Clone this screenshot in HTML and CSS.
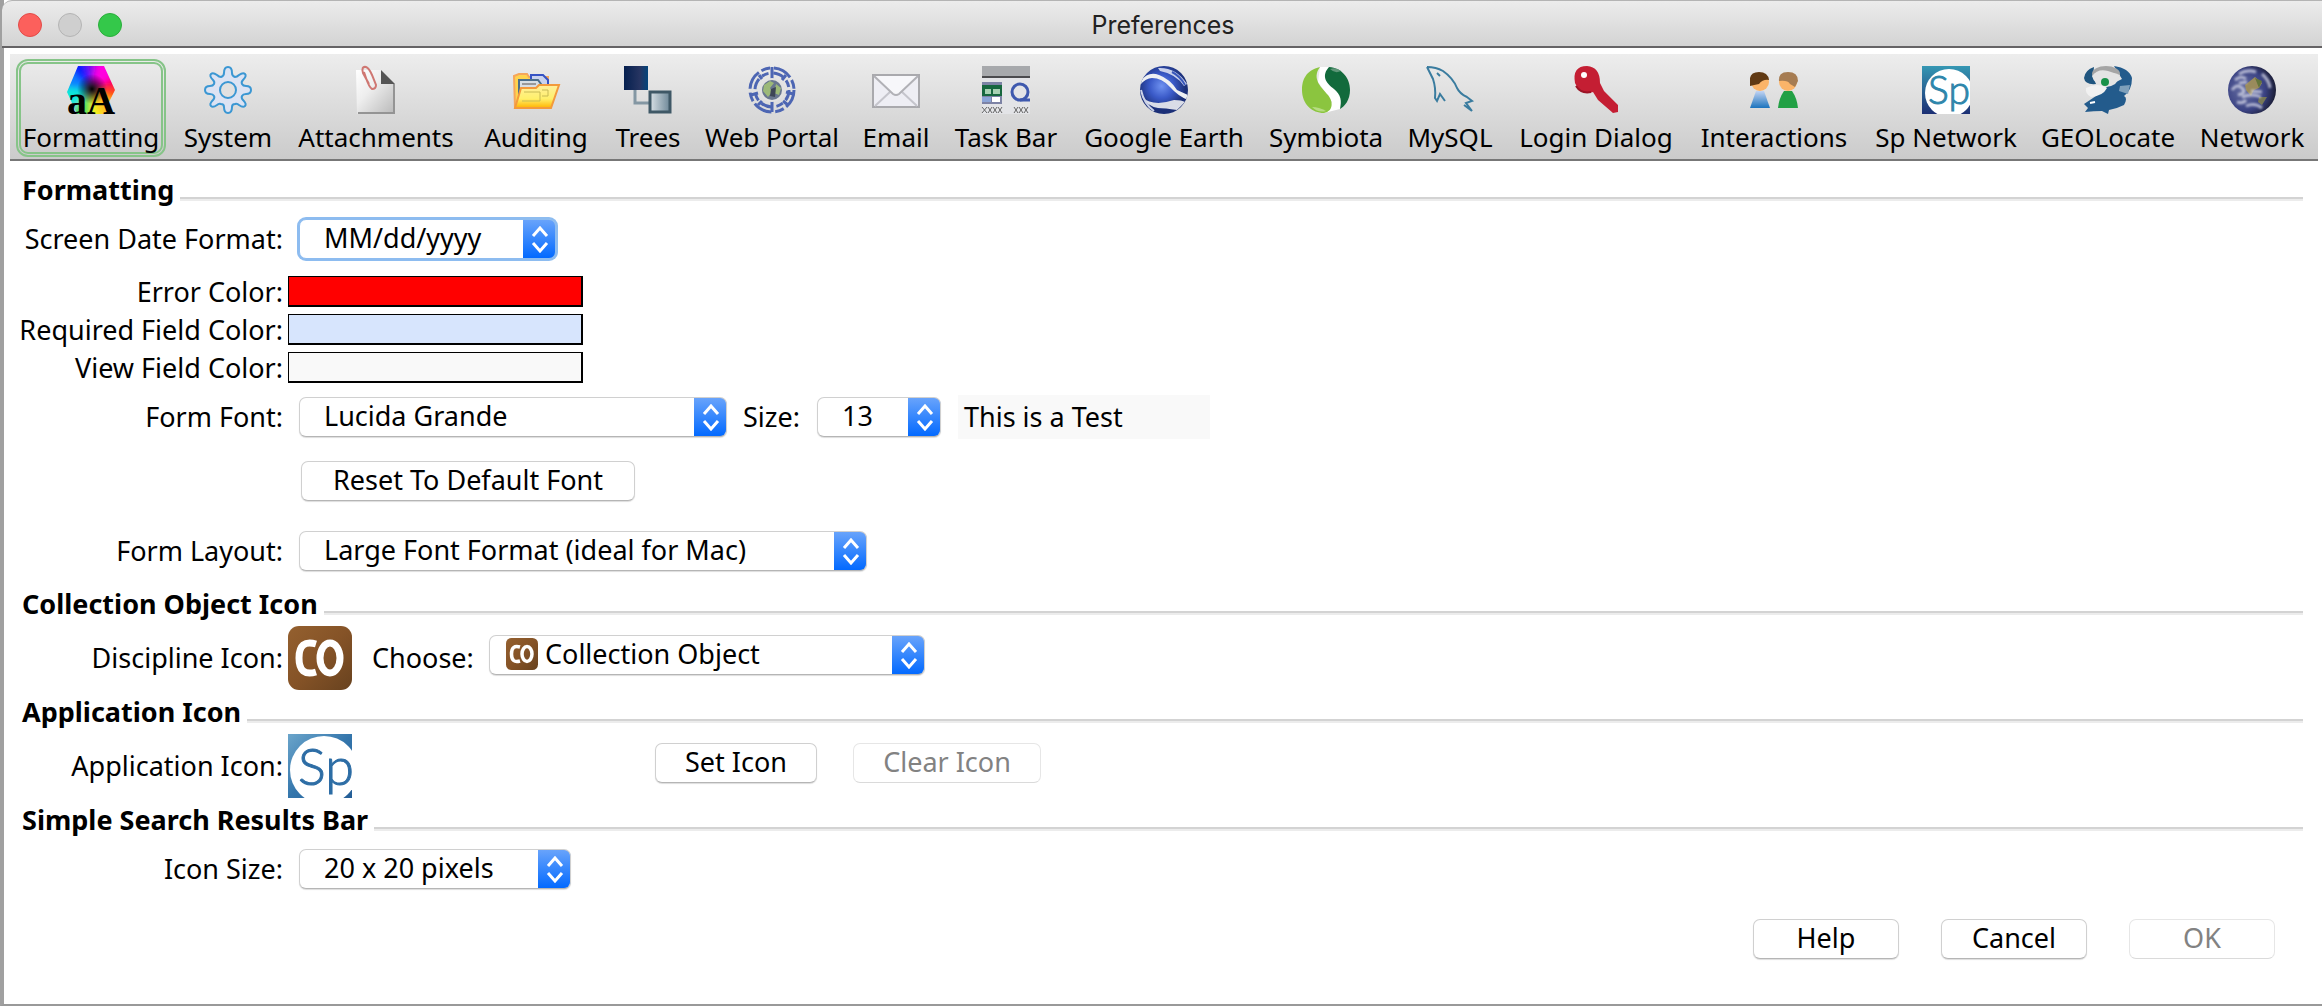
FILE: index.html
```html
<!DOCTYPE html>
<html lang="en">
<head>
<meta charset="utf-8">
<title>Preferences</title>
<link rel="stylesheet" href="styles.css">
</head>
<body>
<div class="window">
  <header class="titlebar">
    <div class="lights">
      <button class="light close" aria-label="Close"></button>
      <button class="light minimize" aria-label="Minimize" disabled></button>
      <button class="light maximize" aria-label="Zoom"></button>
    </div>
    <h1 class="title">Preferences</h1>
  </header>

  <nav class="toolbar" aria-label="Preference sections">
    <button class="tool selected">
      <svg viewBox="0 0 48 48" aria-hidden="true">
        <defs>
          <clipPath id="hex"><path d="M11 0H37L48 24L42 36V48H10L0 26Z"/></clipPath>
          <filter id="soft"><feGaussianBlur stdDeviation="3"/></filter>
          <radialGradient id="dark"><stop offset="0" stop-color="#000"/><stop offset="1" stop-color="#000" stop-opacity="0"/></radialGradient>
        </defs>
        <g clip-path="url(#hex)"><g filter="url(#soft)">
          <path d="M24 24L-8 -6H22Z" fill="#0a1cff"/><path d="M24 24L18 -8H32Z" fill="#7a10f0"/>
          <path d="M24 24L30 -8H58V8Z" fill="#ff00e0"/><path d="M24 24L58 4V26Z" fill="#ff0048"/>
          <path d="M24 24L58 22V44Z" fill="#ff4a10"/><path d="M24 24L54 36L34 58Z" fill="#ffc020"/>
          <path d="M24 24L38 58H18Z" fill="#f2f21a"/><path d="M24 24L22 58H-4Z" fill="#3be05a"/>
          <path d="M24 24L-8 54V16Z" fill="#0fe8d8"/><path d="M24 24L-8 20V-8Z" fill="#0a80ff"/>
        </g><circle cx="25" cy="23" r="15" fill="url(#dark)"/></g>
        <text x="0" y="48" class="glyph-serif" font-size="40">a</text>
        <text x="20" y="48" class="glyph-serif" font-size="39">A</text>
      </svg>
      <span>Formatting</span>
    </button>
    <button class="tool">
      <svg viewBox="0 0 48 48" aria-hidden="true">
        <path d="M20 7Q20 1 24 1T28 7Q28 10 31 11Q33 11 35 9Q39 6 41 8T39 14Q37 16 38 18Q39 20 42 20Q47 20 47 24T42 28Q39 28 38 30Q37 32 39 34Q43 38 41 40T35 39Q33 37 31 38Q28 38 28 41Q28 47 24 47T20 41Q20 38 17 38Q15 37 13 39Q9 42 7 40T9 34Q11 32 10 30Q9 28 6 28Q1 28 1 24T6 20Q9 20 10 18Q11 16 9 14Q5 10 7 8T13 9Q15 11 17 11Q20 10 20 7Z" fill="#dce3f3" stroke="#3b97d3" stroke-width="2"/>
        <circle cx="24" cy="24" r="8" fill="#e1e1e1" stroke="#3b97d3" stroke-width="2"/>
      </svg>
      <span>System</span>
    </button>
    <button class="tool">
      <svg viewBox="0 0 48 48" aria-hidden="true">
        <defs><linearGradient id="paper" x1="0" y1="0" x2="1" y2="1"><stop offset="0" stop-color="#fff"/><stop offset=".4" stop-color="#eee"/><stop offset="1" stop-color="#b8b8b8"/></linearGradient></defs>
        <path d="M4 4H29V18H43V48H5Z" fill="url(#paper)"/><path d="M42 18V47H6" fill="none" stroke="#949494" stroke-width="2"/>
        <path d="M29 4L43 18H29Z" fill="#555"/>
        <path d="M17 18L11 7Q9 0 14 1Q17 2 20 9L24 19Q24 23 20 23Q17 21 14 12L12 6" fill="none" stroke="#cf7772" stroke-width="2"/>
      </svg>
      <span>Attachments</span>
    </button>
    <button class="tool">
      <svg viewBox="0 0 48 48" aria-hidden="true">
        <defs><linearGradient id="folder" x1="0" y1="0" x2="0" y2="1"><stop offset="0" stop-color="#ffef9c"/><stop offset=".6" stop-color="#fff06a"/><stop offset="1" stop-color="#ffb300"/></linearGradient></defs>
        <path d="M2 10L7 8H15L17 11H36V42H3Z" fill="#ffd34d" stroke="#f5a65b" stroke-width="2"/>
        <path d="M19 9H31L36 14V26H19Z" fill="#c9d2ee" stroke="#3552c4" stroke-width="2"/>
        <path d="M7 14H26L29 18V36H7Z" fill="#d7dfe4" stroke="#4b6e8a" stroke-width="2"/>
        <path d="M10 18H24M10 22H26" stroke="#999" stroke-width="2"/>
        <path d="M9 22H24L27 19H47L39 42H3Z" fill="url(#folder)" stroke="#f39a3c" stroke-width="2"/>
        <path d="M12 26H28V35H10M30 24H36V30H30" stroke="#c8bb55" stroke-width="1" fill="none"/>
      </svg>
      <span>Auditing</span>
    </button>
    <button class="tool">
      <svg viewBox="0 0 48 48" aria-hidden="true">
        <defs>
          <linearGradient id="navy"><stop offset="0" stop-color="#05204f"/><stop offset=".65" stop-color="#263461"/><stop offset="1" stop-color="#04457b"/></linearGradient>
          <linearGradient id="steel"><stop offset="0" stop-color="#d9e1e6"/><stop offset="1" stop-color="#6d8797"/></linearGradient>
        </defs>
        <path d="M11 24V37H25" fill="none" stroke="#8497a3" stroke-width="3"/>
        <path d="M0 0H24V24H0Z" fill="url(#navy)"/>
        <path d="M26 26H46V46H26Z" fill="url(#steel)" stroke="#3f5866" stroke-width="3"/>
      </svg>
      <span>Trees</span>
    </button>
    <button class="tool">
      <svg viewBox="0 0 48 48" aria-hidden="true">
        <g fill="none" stroke="#4d66b3" stroke-width="3">
          <circle cx="24" cy="24" r="22" stroke-dasharray="19 3 9 4"/>
          <circle cx="24" cy="24" r="17" stroke-dasharray="11 4 7 5"/>
          <path d="M24 1V13M11 9L14 13M38 9L34 14M3 29L10 27M45 28L38 26M14 35L10 39M24 35V46M35 35L40 39"/>
        </g>
        <circle cx="24" cy="24" r="12" fill="#e2e2e2"/>
        <circle cx="24" cy="24" r="10" fill="#69778f"/>
        <path d="M16 19L22 15L26 17L22 22L24 26L20 31L15 25ZM28 18L33 22L31 29L26 27Z" fill="#9cb978"/><path d="M23 23L28 21L27 31L22 30Z" fill="#3d4656"/>
      </svg>
      <span>Web Portal</span>
    </button>
    <button class="tool">
      <svg viewBox="0 0 48 48" aria-hidden="true">
        <path d="M1 9H47V41H1Z" fill="#eeeef4" stroke="#a9a9ad" stroke-width="2"/>
        <path d="M3 40L19 25M45 40L29 25" stroke="#c5c5cc" stroke-width="2"/>
        <path d="M2 10L21 28Q24 30 27 28L46 10" fill="#f7f7fa" stroke="#b1b1b6" stroke-width="2"/>
      </svg>
      <span>Email</span>
    </button>
    <button class="tool">
      <svg viewBox="0 0 48 48" aria-hidden="true">
        <path d="M0 0H48V48H0Z" fill="#e3e4e7"/><path d="M0 0H48V10H0Z" fill="#a7a9ac"/><path d="M0 10H48V12H0Z" fill="#4b4b4e"/>
        <path d="M0 16H20V38H0Z" fill="#7d83a5"/><path d="M0 19H20V30H0Z" fill="#17673f"/><path d="M3 23H9V28H3ZM11 23H18V28H11Z" fill="#a7d1b2"/><path d="M10 31H18V36H10Z" fill="#fff"/><path d="M0 31H9V36H0Z" fill="#8ba4d7"/>
        <circle cx="38" cy="26" r="8" fill="none" stroke="#3e59ae" stroke-width="3"/><path d="M38 34H48" stroke="#3e59ae" stroke-width="3"/>
        <path d="M0 41L5 47M5 41L0 47M6 41L10 47M10 41L6 47M11 41L15 47M15 41L11 47M16 41L20 47M20 41L16 47M32 41L36 47M36 41L32 47M37 41L41 47M41 41L37 47M42 41L46 47M46 41L42 47" stroke="#666" stroke-width="1"/>
      </svg>
      <span>Task Bar</span>
    </button>
    <button class="tool">
      <svg viewBox="0 0 48 48" aria-hidden="true">
        <defs><radialGradient id="ocean" cx=".45" cy=".42"><stop offset="0" stop-color="#6f92f0"/><stop offset=".5" stop-color="#3a5ac8"/><stop offset="1" stop-color="#1b2f77"/></radialGradient><clipPath id="ball"><circle cx="24" cy="24" r="24"/></clipPath></defs>
        <g clip-path="url(#ball)"><path d="M0 0H48V48H0Z" fill="url(#ocean)"/>
        <path d="M1 15Q8 5 19 9T37 24L48 29V34Q38 30 30 21T12 12Q6 12 0 19Z" fill="#eef0f3"/>
        <path d="M18 2Q36 1 47 18L44 20Q36 8 20 5Z" fill="#c9d1ec"/><path d="M32 6Q40 10 45 19" stroke="#3957ba" stroke-width="2" fill="none"/>
        <path d="M2 31Q13 41 34 34Q42 34 45 36L37 44Q25 42 18 42Q7 40 2 31Z" fill="#d9dce7"/>
        <path d="M1 24Q4 38 14 45" stroke="#cbd2e8" stroke-width="2" fill="none"/></g>
      </svg>
      <span>Google Earth</span>
    </button>
    <button class="tool">
      <svg viewBox="0 0 48 48" aria-hidden="true">
        <path d="M18 1H28L40 20L38 43L22 47L30 36L16 16Z" fill="#fff"/>
        <path d="M18 1C4 4 0 14 0 24C0 38 10 47 22 47C32 45 31 35 26 29C20 22 9 13 18 1Z" fill="#8bc53f"/>
        <path d="M27 1C40 2 48 12 48 24C48 34 43 40 38 43C40 35 39 29 32 23C24 17 19 10 27 1Z" fill="#126a3c"/>
        <path d="M28 3Q34 1 39 5Q33 8 28 3Z" fill="#5f9678"/><path d="M10 41Q17 41 24 45Q16 47 10 41Z" fill="#b7dc83"/>
      </svg>
      <span>Symbiota</span>
    </button>
    <button class="tool">
      <svg viewBox="0 0 48 48" aria-hidden="true">
        <path d="M2 2Q10 1 16 4Q26 9 30 19Q34 28 41 31L46 36L41 37L46 44L38 38L40 35Q32 31 29 25L24 13Q14 4 2 2L7 14Q10 23 9 30L12 35L14 27L20 35" fill="none" stroke="#e9e9e9" stroke-width="0"/>
        <path d="M1 1Q10 1 17 5Q27 12 31 22Q34 28 41 31L46 35L40 37L46 45M46 45L38 39M1 1L7 13Q10 22 9 32L11 35L14 28L19 35" fill="none" stroke="#3a7c9f" stroke-width="2"/>
        <path d="M11 7L14 10" stroke="#3a7c9f" stroke-width="2"/>
      </svg>
      <span>MySQL</span>
    </button>
    <button class="tool">
      <svg viewBox="0 0 48 48" aria-hidden="true">
        <path d="M3 17Q0 0 15 0Q28 1 28 17L32 25L46 39V46L41 47L26 34L21 26Q8 30 3 17Z" fill="#c41e33"/>
        <path d="M4 20Q9 28 19 26" stroke="#9b1426" stroke-width="2" fill="none"/><circle cx="12" cy="9" r="3" fill="#fff"/>
      </svg>
      <span>Login Dialog</span>
    </button>
    <button class="tool">
      <svg viewBox="0 0 48 48" aria-hidden="true">
        <defs><linearGradient id="shirt" x1="0" y1="0" x2="0" y2="1"><stop offset="0" stop-color="#c3d4f3"/><stop offset="1" stop-color="#1b73bd"/></linearGradient></defs>
        <circle cx="10" cy="16" r="9" fill="#fbb469"/><path d="M0 20V12Q1 6 9 6Q18 6 19 14Q13 13 9 18Q4 19 0 20Z" fill="#603913"/><path d="M6 25H14L20 42H0Z" fill="url(#shirt)"/>
        <circle cx="38" cy="16" r="9" fill="#fbb469"/><path d="M29 15Q28 6 38 6Q48 6 48 15L45 21L40 18Q38 14 29 15Z" fill="#a67c52"/><path d="M34 25H42Q47 32 48 42H28Q29 32 34 25Z" fill="#22a045"/>
      </svg>
      <span>Interactions</span>
    </button>
    <button class="tool">
      <svg viewBox="0 0 48 48" aria-hidden="true">
        <defs><linearGradient id="spn" x1="0" y1="0" x2="0" y2="1"><stop offset="0" stop-color="#3597b3"/><stop offset="1" stop-color="#1c2f74"/></linearGradient><clipPath id="tile48"><path d="M0 0H48V48H0Z"/></clipPath></defs>
        <path d="M0 0H48V48H0Z" fill="url(#spn)"/><circle cx="27" cy="27" r="24" fill="#fff" clip-path="url(#tile48)"/>
        <text x="6" y="38" class="glyph-light" font-size="39" fill="#2e86ab" stroke="#2e86ab">Sp</text>
      </svg>
      <span>Sp Network</span>
    </button>
    <button class="tool">
      <svg viewBox="0 0 48 48" aria-hidden="true">
        <path d="M30 0Q45 2 48 12Q48 24 40 30Q44 32 40 39Q32 43 25 44L24 48L18 45Q10 45 1 46L4 42L0 38L12 30L24 20L38 13Z" fill="#235b8c"/>
        <path d="M10 1Q1 4 0 12Q1 19 12 18L9 10Z" fill="#1f557f"/>
        <ellipse cx="22" cy="8" rx="14" ry="8" fill="#a5a5a5"/><path d="M8 10Q14 2 24 5T36 9Q34 20 22 21Q10 19 8 10Z" fill="#e4e4e4"/>
        <path d="M2 22Q14 16 23 22Q19 30 7 31Q1 28 2 22Z" fill="#f1f1f1"/><path d="M36 20L46 19L44 28L35 25Z" fill="#7ea0bb"/>
        <path d="M6 37L11 36" stroke="#fff" stroke-width="2"/><circle cx="21" cy="16" r="4" fill="#199149"/>
      </svg>
      <span>GEOLocate</span>
    </button>
    <button class="tool">
      <svg viewBox="0 0 48 48" aria-hidden="true">
        <defs><radialGradient id="globe" cx=".35" cy=".5" r=".65"><stop offset="0" stop-color="#6a72a4"/><stop offset=".65" stop-color="#3a4283"/><stop offset="1" stop-color="#1b1d35"/></radialGradient><filter id="haze"><feGaussianBlur stdDeviation="1"/></filter></defs>
        <circle cx="24" cy="24" r="24" fill="url(#globe)"/>
        <path d="M17 19L27 11L34 17L31 22L26 24L23 30L18 24Z" fill="#9a8b5c"/><path d="M27 12L34 15L31 22Z" fill="#64753b"/><path d="M31 31L39 31L34 39L30 36Z" fill="#777756"/>
        <g fill="none" stroke="#d6d8e8" stroke-width="3" opacity=".75" filter="url(#haze)"><path d="M7 14Q13 9 18 13M11 8Q19 3 28 6M4 24Q9 17 14 22T10 29M14 31Q24 27 33 31M18 40Q27 36 34 42M34 8Q41 14 42 22M9 36Q15 38 18 34M23 25L34 26M11 17L19 16"/></g>
      </svg>
      <span>Network</span>
    </button>
  </nav>

  <main class="content">
    <section>
      <h2>Formatting</h2>
      <div class="row date-row">
        <label class="name" for="date">Screen Date Format:</label>
        <select id="date" class="combo date focused"><option>MM/dd/yyyy</option></select>
      </div>
      <div class="row color-row">
        <label class="name" for="c1">Error Color:</label>
        <button id="c1" class="swatch error" aria-label="Error Color"></button>
      </div>
      <div class="row color-row">
        <label class="name" for="c2">Required Field Color:</label>
        <button id="c2" class="swatch required" aria-label="Required Field Color"></button>
      </div>
      <div class="row color-row">
        <label class="name" for="c3">View Field Color:</label>
        <button id="c3" class="swatch view" aria-label="View Field Color"></button>
      </div>
      <div class="row font-row">
        <label class="name" for="font">Form Font:</label>
        <select id="font" class="combo font"><option>Lucida Grande</option></select>
        <label class="size-label" for="size">Size:</label>
        <select id="size" class="combo size"><option>13</option></select>
        <output class="sample">This is a Test</output>
      </div>
      <div class="row reset-row">
        <button class="push reset">Reset To Default Font</button>
      </div>
      <div class="row layout-row">
        <label class="name" for="layout">Form Layout:</label>
        <select id="layout" class="combo layout"><option>Large Font Format (ideal for Mac)</option></select>
      </div>
    </section>

    <section>
      <h2>Collection Object Icon</h2>
      <div class="row icon-row">
        <span class="name">Discipline Icon:</span>
        <svg class="big-icon" viewBox="0 0 64 64" role="img" aria-label="Collection Object">
          <defs><linearGradient id="brown" x1="0" y1="0" x2="1" y2="1"><stop offset="0" stop-color="#94602f"/><stop offset=".5" stop-color="#855327"/><stop offset="1" stop-color="#68421f"/></linearGradient></defs>
          <rect width="64" height="64" rx="11" fill="url(#brown)"/>
          <g fill="none" stroke="#fff" stroke-width="7"><path d="M28 18Q11 13 11 32T28 46"/><ellipse cx="42" cy="32" rx="10" ry="15"/></g>
        </svg>
        <label class="choose-label" for="choose">Choose:</label>
        <div class="icon-combo">
          <select id="choose" class="combo choose"><option>Collection Object</option></select>
          <svg class="small-icon" viewBox="0 0 64 64" aria-hidden="true">
            <rect width="64" height="64" rx="11" fill="url(#brown)"/>
            <g fill="none" stroke="#fff" stroke-width="7"><path d="M28 18Q11 13 11 32T28 46"/><ellipse cx="42" cy="32" rx="10" ry="15"/></g>
          </svg>
        </div>
      </div>
    </section>

    <section>
      <h2>Application Icon</h2>
      <div class="row icon-row">
        <span class="name">Application Icon:</span>
        <svg class="big-icon" viewBox="0 0 64 64" role="img" aria-label="Specify">
          <defs><linearGradient id="blue" x1="0" y1="0" x2="1" y2="1"><stop offset="0" stop-color="#6ba5cb"/><stop offset=".5" stop-color="#3476ac"/><stop offset="1" stop-color="#245d96"/></linearGradient></defs>
          <path d="M0 0H64V64H0Z" fill="url(#blue)"/><circle cx="36" cy="36" r="34" fill="#fff"/>
          <text x="10" y="51" class="glyph-light" font-size="52" fill="#2d6da5" stroke="#2d6da5">Sp</text>
        </svg>
        <button class="push set">Set Icon</button>
        <button class="push clear" disabled>Clear Icon</button>
      </div>
    </section>

    <section>
      <h2>Simple Search Results Bar</h2>
      <div class="row size-row">
        <label class="name" for="isize">Icon Size:</label>
        <select id="isize" class="combo isize"><option>20 x 20 pixels</option></select>
      </div>
    </section>

    <footer class="actions">
      <button class="push">Help</button>
      <button class="push">Cancel</button>
      <button class="push" disabled>OK</button>
    </footer>
  </main>
</div>
</body>
</html>
```
FILE: styles.css
```css
* { box-sizing: border-box; }

body {
  margin: 0;
  background: #d8d8d8;
  color: #000;
  font: 27px/32px "Noto Sans", "Open Sans", sans-serif;
}

button, select { font: inherit; color: inherit; margin: 0; }

.window {
  display: flex;
  flex-direction: column;
  min-height: 100vh;
  background: #fff;
  border-left: 4px solid #a0a0a0;
  border-bottom: 2px solid #999;
}

/* Title bar */
.titlebar {
  display: grid;
  grid-template-columns: 1fr auto 1fr;
  align-items: center;
  height: 48px;
  margin-left: -2px;
  padding: 2px 14px 0 16px;
  background: linear-gradient(#ececec, #d3d3d3);
  border-top: 1px solid #b4b4b4;
  border-bottom: 2px solid #656365;
  border-top-left-radius: 10px;
}
.lights { display: flex; gap: 16px; }
.light { width: 24px; height: 24px; padding: 0; border: 1px solid; border-radius: 50%; }
.close { background: #fc605c; border-color: #e24b48; }
.minimize { background: #cfcfcf; border-color: #b4b4b4; }
.maximize { background: #34c84a; border-color: #2aae3b; }
.title { margin: 0; font: 400 25px/32px Inter, "Noto Sans", sans-serif; color: #222; }

/* Toolbar */
.toolbar {
  display: grid;
  grid-template-columns: 150fr 104fr 172fr 128fr 76fr 152fr 76fr 124fr 172fr 132fr 96fr 176fr 160fr 164fr 140fr 128fr;
  column-gap: 10px;
  margin: 6px 4px 0 6px;
  padding: 5px 2px 2px 6px;
  background: linear-gradient(#ededed, #cbcbcb);
  border-bottom: 2px solid #777;
}
.tool {
  display: flex;
  flex-direction: column;
  align-items: center;
  gap: 8px;
  min-width: 0;
  padding: 2px 0 0;
  font-size: 26px;
  line-height: 30px;
  white-space: nowrap;
  background: none;
  border: 5px double transparent;
  border-radius: 12px;
}
.tool svg { width: 48px; height: 48px; overflow: visible; }
.tool.selected { border-color: #86c488; }
.tool span { margin: 0 -8px; }
.glyph-serif { font-family: "Liberation Serif", serif; font-weight: 700; }
.glyph-light { font-family: Lato, "Open Sans", sans-serif; font-weight: 300; }

/* Form */
.content { padding: 13px 19px 0 18px; }
h2 {
  display: flex;
  gap: 6px;
  margin: 0;
  font-size: 27px;
  line-height: 32px;
  font-weight: 700;
}
h2::after {
  content: "";
  flex: 1;
  height: 4px;
  margin-top: 23px;
  background: linear-gradient(#d3d3d3 50%, #ececec 50%);
}
.row { display: flex; align-items: center; }
.name { width: 265px; margin-left: -4px; text-align: right; white-space: nowrap; flex: none; }
.date-row { height: 40px; margin: 13px 0 17px; }
.color-row { height: 31px; margin-bottom: 7px; }
.font-row { height: 40px; margin-top: 14px; }
.reset-row { margin-top: 24px; }
.layout-row { margin: 30px 0 17px; }
.icon-row { height: 64px; margin: 6px 0; }
.size-row { margin-top: 13px; }

.combo {
  appearance: none;
  height: 40px;
  margin-left: 16px;
  padding: 0 40px 3px 24px;
  line-height: 34px;
  border: 1px solid #d0d0d0;
  border-bottom-color: #b5b5b5;
  border-radius: 7px;
  box-shadow: 0 1px 1px #ddd;
  background:
    url("data:image/svg+xml,%3Csvg xmlns='http://www.w3.org/2000/svg' width='33' height='40'%3E%3Cpath d='M10 17l7-8 7 8M10 24l7 8 7-8' fill='none' stroke='white' stroke-width='3'/%3E%3C/svg%3E") right center / 33px 40px no-repeat border-box,
    linear-gradient(#6ba5fb, #0068ff) right / 33px 40px no-repeat border-box,
    #fff;
}
.focused { border-color: #8dbcf0; box-shadow: 0 0 0 2px #8dbcf0; outline: none; }
.date { width: 257px; }
.font { width: 428px; }
.size { width: 124px; }
.layout { width: 568px; }
.isize { width: 272px; }
.choose { width: 436px; padding-left: 55px; }
.size-label { margin-left: 16px; width: 58px; }
.sample { margin-left: 17px; width: 252px; padding: 6px; background: #f9f9f9; }
.choose-label { margin-left: 20px; width: 101px; }
.icon-combo { position: relative; margin-bottom: 6px; }
.small-icon { position: absolute; left: 33px; top: 3px; width: 32px; height: 32px; }
.big-icon { width: 64px; height: 64px; margin-left: 5px; flex: none; overflow: hidden; }

.swatch {
  width: 295px;
  height: 31px;
  margin-left: 5px;
  padding: 0;
  border: solid #000;
  border-width: 1px 2px 2px 1px;
}
.error { background: #f00; }
.required { background: #d7e5fd; }
.view { background: #f9f9f9; }

.push {
  width: 146px;
  height: 40px;
  padding: 0 0 3px;
  line-height: 34px;
  background: #fff;
  border: 1px solid #d0d0d0;
  border-bottom-color: #b5b5b5;
  border-radius: 7px;
  box-shadow: 0 1px 1px #ddd;
}
.push:disabled { color: #828282; border-color: #e6e6e6; border-bottom-color: #dadada; box-shadow: none; }
.reset { width: 334px; margin-left: 279px; }
.set { width: 162px; margin: 0 36px 6px 303px; }
.clear { width: 188px; margin-bottom: 6px; }

.actions { display: flex; justify-content: flex-end; gap: 42px; margin-top: 30px; padding-right: 28px; }
```
